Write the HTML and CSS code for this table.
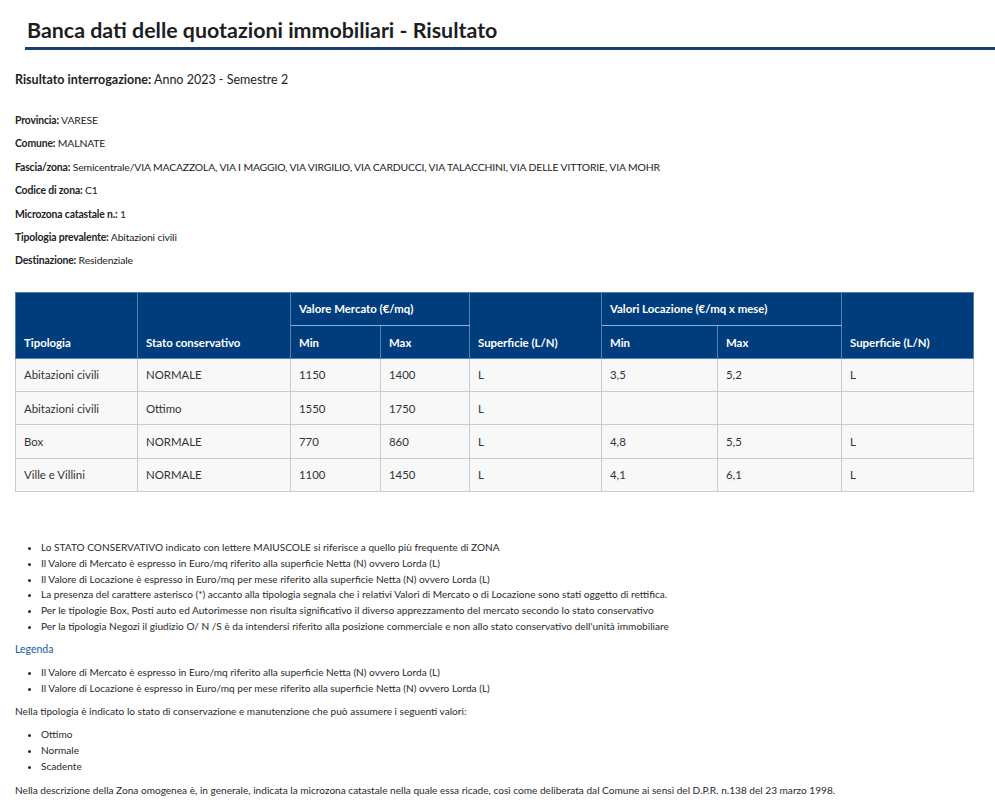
FILE: index.html
```html
<!DOCTYPE html>
<html lang="it">
<head>
<meta charset="utf-8">
<title>Banca dati delle quotazioni immobiliari - Risultato</title>
<link rel="stylesheet" href="styles.css">
</head>
<body>
<header class="page-head">
  <h1 class="title">Banca dati delle quotazioni immobiliari - Risultato</h1>
</header>
<main class="content">
  <p class="query"><b>Risultato interrogazione:</b> Anno 2023 - Semestre 2</p>
  <div class="info">
    <p><b>Provincia:</b> VARESE</p>
    <p><b>Comune:</b> MALNATE</p>
    <p><b>Fascia/zona:</b> Semicentrale/VIA MACAZZOLA, VIA I MAGGIO, VIA VIRGILIO, VIA CARDUCCI, VIA TALACCHINI, VIA DELLE VITTORIE, VIA MOHR</p>
    <p><b>Codice di zona:</b> C1</p>
    <p><b>Microzona catastale n.:</b> 1</p>
    <p><b>Tipologia prevalente:</b> Abitazioni civili</p>
    <p><b>Destinazione:</b> Residenziale</p>
  </div>
  <table class="results">
    <colgroup>
      <col class="c1"><col class="c2"><col class="c3"><col class="c4"><col class="c5"><col class="c6"><col class="c7"><col class="c8">
    </colgroup>
    <thead>
      <tr>
        <th rowspan="2">Tipologia</th>
        <th rowspan="2">Stato conservativo</th>
        <th colspan="2">Valore Mercato (€/mq)</th>
        <th rowspan="2">Superficie (L/N)</th>
        <th colspan="2">Valori Locazione (€/mq x mese)</th>
        <th rowspan="2">Superficie (L/N)</th>
      </tr>
      <tr>
        <th>Min</th><th>Max</th><th>Min</th><th>Max</th>
      </tr>
    </thead>
    <tbody>
      <tr><td>Abitazioni civili</td><td>NORMALE</td><td>1150</td><td>1400</td><td>L</td><td>3,5</td><td>5,2</td><td>L</td></tr>
      <tr><td>Abitazioni civili</td><td>Ottimo</td><td>1550</td><td>1750</td><td>L</td><td></td><td></td><td></td></tr>
      <tr><td>Box</td><td>NORMALE</td><td>770</td><td>860</td><td>L</td><td>4,8</td><td>5,5</td><td>L</td></tr>
      <tr><td>Ville e Villini</td><td>NORMALE</td><td>1100</td><td>1450</td><td>L</td><td>4,1</td><td>6,1</td><td>L</td></tr>
    </tbody>
  </table>
  <ul class="notes first">
    <li>Lo STATO CONSERVATIVO indicato con lettere MAIUSCOLE si riferisce a quello più frequente di ZONA</li>
    <li>Il Valore di Mercato è espresso in Euro/mq riferito alla superficie Netta (N) ovvero Lorda (L)</li>
    <li>Il Valore di Locazione è espresso in Euro/mq per mese riferito alla superficie Netta (N) ovvero Lorda (L)</li>
    <li>La presenza del carattere asterisco (*) accanto alla tipologia segnala che i relativi Valori di Mercato o di Locazione sono stati oggetto di rettifica.</li>
    <li>Per le tipologie Box, Posti auto ed Autorimesse non risulta significativo il diverso apprezzamento del mercato secondo lo stato conservativo</li>
    <li>Per la tipologia Negozi il giudizio O/ N /S è da intendersi riferito alla posizione commerciale e non allo stato conservativo dell'unità immobiliare</li>
  </ul>
  <p class="legend">Legenda</p>
  <ul class="notes">
    <li>Il Valore di Mercato è espresso in Euro/mq riferito alla superficie Netta (N) ovvero Lorda (L)</li>
    <li>Il Valore di Locazione è espresso in Euro/mq per mese riferito alla superficie Netta (N) ovvero Lorda (L)</li>
  </ul>
  <p class="text">Nella tipologia è indicato lo stato di conservazione e manutenzione che può assumere i seguenti valori:</p>
  <ul class="notes">
    <li>Ottimo</li>
    <li>Normale</li>
    <li>Scadente</li>
  </ul>
  <p class="text">Nella descrizione della Zona omogenea è, in generale, indicata la microzona catastale nella quale essa ricade, così come deliberata dal Comune ai sensi del D.P.R. n.138 del 23 marzo 1998.</p>
</main>
</body>
</html>
```

FILE: styles.css
```css
* { box-sizing: border-box; }

html, body {
  margin: 0;
  padding: 0;
  background: #ffffff;
}

body {
  font-family: "Lato", "Liberation Sans", sans-serif;
  color: #222222;
  font-size: 11px;
}

.page-head {
  padding: 17px 0 0 25px;
}

.title {
  margin: 0;
  padding: 0 0 4px 2px;
  font-size: 21.4px;
  font-weight: 700;
  line-height: 26px;
  color: #1e1e1e;
  border-bottom: 3px solid #1b3f6e;
}

.content {
  padding: 0 22px 0 15px;
}

.query {
  margin: 21px 0 0;
  font-size: 12.5px;
  line-height: 18px;
}

.info {
  margin-top: 20px;
}

.info p {
  margin: 0;
  line-height: 23.4px;
  font-size: 10.4px;
  letter-spacing: -0.15px;
}

.results {
  margin-top: 19px;
  width: 958px;
  border-collapse: collapse;
  table-layout: fixed;
  border: 1px solid #c7d3e3;
}

.c1 { width: 122px; }
.c2 { width: 153px; }
.c3 { width: 90px; }
.c4 { width: 89px; }
.c5 { width: 132px; }
.c6 { width: 116px; }
.c7 { width: 124px; }
.c8 { width: 132px; }

.results th {
  background: #003d7d;
  color: #ffffff;
  font-weight: 700;
  text-align: left;
  vertical-align: bottom;
  padding: 0 8px 9px;
  height: 33px;
  border: 1px solid #5a7fae;
  font-size: 11.4px;
}

.results thead tr:first-child th[colspan] {
  vertical-align: middle;
  padding-bottom: 0;
  border-bottom: 1px solid #8fb0d8;
}

.results td {
  background: #f8f8f8;
  height: 33.3px;
  padding: 0 8px;
  border: 1px solid #cccccc;
  color: #333333;
  font-size: 11.4px;
}

.notes {
  margin: 0;
  padding: 0 0 0 26px;
  list-style: disc;
  color: #2a2a2a;
}

.notes li {
  line-height: 15.8px;
  font-size: 10.1px;
}

.notes.first {
  margin-top: 48px;
}

.legend {
  margin: 6px 0 8px;
  color: #1b5a9b;
  line-height: 16px;
  font-size: 10.5px;
}

.text {
  margin: 7px 0 8px;
  line-height: 16px;
  font-size: 10.1px;
  color: #2a2a2a;
}
```
